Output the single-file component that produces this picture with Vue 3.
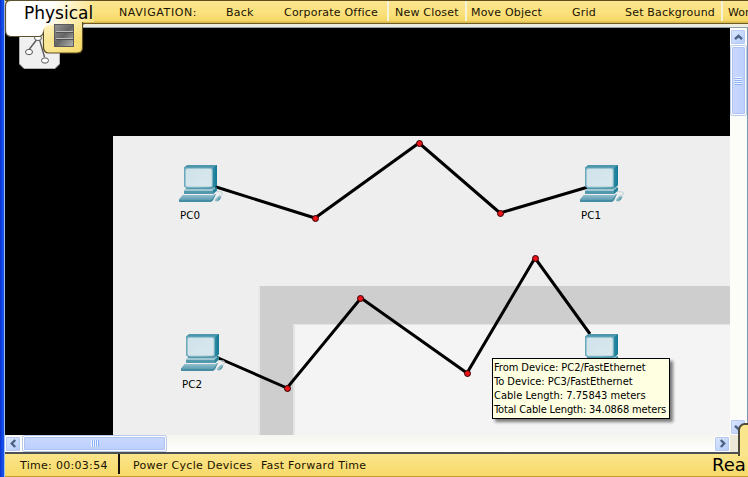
<script setup>
const nav = [
  { text: 'Back', cls: 'back' },
  { text: 'Corporate Office', cls: 'office' },
  { text: 'New Closet', cls: 'closet' },
  { text: 'Move Object', cls: 'move' },
  { text: 'Grid', cls: 'grid' },
  { text: 'Set Background', cls: 'background' },
  { text: 'Wor', cls: 'working' }
]
const cables = [
  '213,186 315,218 419,143 500,213 588,187',
  '216,357 287,388 361,298 467,373 535,258 590,334'
]
const bends = [[315, 218], [419, 143], [500, 213], [287, 388], [360, 298], [467, 373], [535, 258]]
const pcs = [
  { name: 'PC0', x: 179, y: 165, tx: 180, ty: 219 },
  { name: 'PC1', x: 580, y: 165, tx: 581, ty: 219 },
  { name: 'PC2', x: 181, y: 334, tx: 182, ty: 388 },
  { name: '', x: 580, y: 334, tx: 581, ty: 388 }
]
</script>

<template>
  <div class="window">
    <header class="toolbar">
      <span class="nav-title">NAVIGATION:</span>
      <span v-for="n in nav" :key="n.text" class="nav" :class="n.cls">{{ n.text }}</span>
    </header>
    <div class="workspace">
      <svg class="scene" width="725" height="407" viewBox="5 28 725 407">
        <defs>
          <linearGradient id="screen" x1="0" y1="0" x2="1" y2="1">
            <stop offset="0" stop-color="#cfe2ea" /><stop offset="1" stop-color="#dae8ee" />
          </linearGradient>
          <linearGradient id="keys" x1="0" y1="0" x2="0" y2="1">
            <stop offset="0" stop-color="#91c0ce" /><stop offset="1" stop-color="#5e9db1" />
          </linearGradient>
          <linearGradient id="side" x1="0" y1="0" x2="1" y2="0">
            <stop offset="0" stop-color="#2c8aa2" /><stop offset="1" stop-color="#147a96" />
          </linearGradient>
        </defs>
        <rect x="5" y="28" width="725" height="407" fill="#000" />
        <rect x="113" y="136" width="617" height="299" fill="#eee" />
        <path d="M258 435V286H730V435Z" fill="#e8e8e8" />
        <path d="M260 435V286H730V435Z" fill="#cecece" />
        <path d="M293 435V324H730V435Z" fill="#e4e4e4" />
        <path d="M295 435V325H730V435Z" fill="#f4f4f4" />
        <polyline v-for="c in cables" :key="c" :points="c" fill="none" stroke="#000" stroke-width="3" />
        <circle v-for="(b, i) in bends" :key="i" :cx="b[0] + 0.5" :cy="b[1] + 0.5" r="3" fill="#e9151b" stroke="#310000" />
        <g v-for="(p, i) in pcs" :key="i">
          <g :transform="`translate(${p.x} ${p.y})`">
            <path d="M5 2.5L8 0H38V20L34 24H7Z" fill="#4d97ac" />
            <path d="M34 3L38 0V20L34 24Z" fill="url(#side)" />
            <path d="M5 2.5H34V23H7L5 21.5Z" fill="#68a9bb" />
            <rect x="6.500" y="3.500" width="26.500" height="18.500" rx="2" fill="url(#screen)" stroke="#9cc3cf" stroke-width="0.800" />
            <path d="M7 24L35 22L38 23V26L34 29H5V26Z" fill="#5399ad" />
            <path d="M6 24H33L36 22.5V24L33 26H5Z" fill="#a1c8d2" />
            <path d="M34 25L38 22V25L34 29Z" fill="#28829a" />
            <path d="M4 30H34L37 29L34 35.5L32 37H0V34.5Z" fill="#458da3" />
            <path d="M4 30H36L32 35H0Z" fill="url(#keys)" />
            <path d="M37 26.5L43 27L43.500 29.500L40 31" fill="none" stroke="#c2d4da" />
            <path d="M39.5 31L42.5 31.500L41 34L38.500 36.500L36 36V34.500Z" fill="#8ab8c6" />
            <path d="M42.5 31.500L41 34.500L38.500 36.500L39 34Z" fill="#5b9bad" />
          </g>
          <text v-if="p.name" :x="p.tx" :y="p.ty" class="pc-label" textLength="20" lengthAdjust="spacingAndGlyphs">{{ p.name }}</text>
        </g>
      </svg>
      <div class="vscroll">
        <div class="btn"><svg width="9" height="7" viewBox="0 0 9 7"><path d="M1 5.2L4.5 1.8L8 5.2" /></svg></div>
        <div class="vthumb"><i></i></div>
        <div class="btn end"><svg width="9" height="7" viewBox="0 0 9 7"><path d="M1 1.8L4.5 5.2L8 1.8" /></svg></div>
      </div>
      <div class="hscroll">
        <div class="btn"><svg width="7" height="9" viewBox="0 0 7 9"><path d="M5.2 1L1.8 4.5L5.2 8" /></svg></div>
        <div class="hthumb"><i></i></div>
        <div class="btn end"><svg width="7" height="9" viewBox="0 0 7 9"><path d="M1.8 1L5.2 4.5L1.8 8" /></svg></div>
      </div>
      <div class="corner"></div>
    </div>
    <footer class="status">
      <span class="time">Time: 00:03:54</span>
      <b class="divider"></b>
      <span class="power">Power Cycle Devices</span>
      <span class="fast">Fast Forward Time</span>
      <span class="mode">Rea</span>
    </footer>

    <div class="tabs">
      <svg width="96" height="70" viewBox="0 0 96 70">
        <defs>
          <linearGradient id="tab" gradientUnits="userSpaceOnUse" x1="45" y1="20" x2="88" y2="36">
            <stop offset="0" stop-color="#fff" /><stop offset="1" stop-color="#fae17c" />
          </linearGradient>
          <linearGradient id="small" x1="0" y1="0" x2="1" y2="1">
            <stop offset="0" stop-color="#fff3c0" /><stop offset="1" stop-color="#f4d967" />
          </linearGradient>
          <linearGradient id="metal" x1="0" y1="0" x2="1" y2="1">
            <stop offset="0" stop-color="#969696" /><stop offset="0.5" stop-color="#656565" /><stop offset="1" stop-color="#b5b5b5" />
          </linearGradient>
        </defs>
        <path d="M19.500 30H59.500V64L55 68.500H24L19.500 64Z" fill="#f0f0f0" stroke="#b0b0b0" />
        <g stroke="#555" stroke-width="1" fill="#fff">
          <path d="M38 38L29.500 49M39 38L44.500 57" fill="none" stroke-width="1.300" />
          <ellipse cx="38" cy="38" rx="3.500" ry="2.500" />
          <ellipse cx="29" cy="52" rx="3.500" ry="2.700" /><ellipse cx="45" cy="60.500" rx="3.500" ry="2.700" />
        </g>
        <path d="M43.500 22H82.500V48Q82.500 53 77 53H49Q43.500 53 43.500 47Z" fill="url(#small)" stroke="#5d4d21" stroke-width="1.200" />
        <path d="M5.500 30V6Q5.500 .5 11 .5H94V22H82V26H46Q43.500 28 43 33Q42 36.500 38 36.500H11Q5.500 36 5.500 30Z" fill="url(#tab)" />
        <path d="M96 .5H11Q5.500 .5 5.500 6V30Q5.500 36.500 11 36.500H39Q43 36 43.500 32" fill="none" stroke="#5d5130" stroke-width="1.200" />
        <path d="M44 33Q44 27 48 25H82V43H44Z" fill="url(#small)" />
        <path d="M82.500 45V25Q82.500 23.500 85 23.500" fill="none" stroke="#5d4d21" />
        <rect x="54.500" y="24.500" width="19" height="22" fill="url(#metal)" stroke="#5c5c5c" />
        <path d="M56 31.500H73M56 38.500H73" stroke="#bbb" />
        <path d="M56 32.500H73M56 39.500H73" stroke="#505050" />
      </svg>
      <span class="physical">Physical</span>
    </div>

    <div class="mode-tab"></div>

    <div class="tooltip">
      <div class="t1">From Device: PC2/FastEthernet</div>
      <div class="t2">To Device: PC3/FastEthernet</div>
      <div class="t3">Cable Length: 7.75843 meters</div>
      <div class="t4">Total Cable Length: 34.0868 meters</div>
    </div>
  </div>
</template>

<style>
body { overflow: hidden; }
</style>

<style scoped>
.window {
  position: relative;
  box-sizing: border-box;
  width: 748px;
  height: 477px;
  padding-left: 5px;
  overflow: hidden;
  background: linear-gradient(90deg, #0a2fd0 0, #1755f0 3px, #1246d8 4px, #9fc0ea 4px, #9fc0ea 5px, #efede0 5px);
  font-family: Verdana, "DejaVu Sans", sans-serif;
  font-size: 11px;
  color: #1b1300;
}
.toolbar {
  box-sizing: border-box;
  display: flex;
  width: 743px;
  height: 24px;
  padding-left: 114px;
  border-top: 1px solid #5d4d21;
  border-bottom: 1px solid #6d5b23;
  background: linear-gradient(#fbe68f 0, #fae17c 55%, #f5d867 88%, #d4b24b 100%);
  line-height: 23px;
  white-space: nowrap;
}
.toolbar span { flex: none; box-sizing: border-box; height: 20px; letter-spacing: 0.2px; }
.toolbar .nav-title { width: 107px; letter-spacing: 0.6px; }
.back { width: 58px; }
.office { width: 105px; border-right: 2px solid #f6f1d9; }
.closet { width: 78px; padding-left: 6px; border-right: 2px solid #f6f1d9; }
.move { width: 105px; padding-left: 4px; }
.grid { width: 53px; }
.background { width: 98px; border-right: 2px solid #f6f1d9; }
.toolbar .working { padding-left: 5px; letter-spacing: 0; }
.workspace {
  display: grid;
  grid-template-columns: 725px 18px;
  grid-template-rows: 407px 17px;
  margin-top: 3px;
  border-top: 1px solid #8ca0aa;
}
.scene { display: block; }
.pc-label { font: 11px Tahoma, "DejaVu Sans Condensed", sans-serif; fill: #000; }
.vscroll, .hscroll { display: flex; box-sizing: border-box; background: #fcfcf8; }
.vscroll { flex-direction: column; align-items: center; padding: 1px 1px 0 0; border-right: 1px solid #789aba; }
.hscroll { align-items: center; gap: 1px; background: linear-gradient(#f6f5ee, #fff); }
.btn {
  flex: none;
  display: flex;
  align-items: center;
  justify-content: center;
  box-sizing: border-box;
  width: 16px;
  height: 16px;
  border: 1px solid #fff;
  border-radius: 2px;
  background: linear-gradient(135deg, #dce8ff, #b3caf7);
  box-shadow: inset 0 0 0 1px #b6c9f1;
}
.btn svg { display: block; }
.btn path { fill: none; stroke: #4a6285; stroke-width: 2.4; }
.vscroll .end { margin-top: auto; }
.hscroll .end { margin-left: auto; }
.vthumb, .hthumb {
  box-sizing: border-box;
  display: flex;
  align-items: center;
  justify-content: center;
  border: 1px solid #fff;
  border-radius: 2px;
  box-shadow: inset 0 0 0 1px #aec3ef, 0 0 0 1px #b9cae9;
}
.vthumb { width: 15px; height: 69px; margin-top: 1px; background: linear-gradient(90deg, #cad8ff, #bccffc); }
.hthumb { width: 143px; height: 15px; margin-left: 1px; background: linear-gradient(#cad8ff, #bccffc); }
.vthumb i { width: 7px; height: 8px; background: repeating-linear-gradient(#eef4ff 0 1px, #8cb0f8 1px 2px); }
.hthumb i { width: 8px; height: 7px; background: repeating-linear-gradient(90deg, #eef4ff 0 1px, #8cb0f8 1px 2px); }
.corner { background: #ece9d8; }
.status {
  box-sizing: border-box;
  display: flex;
  width: 743px;
  height: 25px;
  padding-left: 15px;
  border-top: 2px solid #4d5052;
  border-bottom: 1px solid #c29d29;
  box-shadow: 0 -1px #9db3bf;
  background: linear-gradient(#fbe58b, #f7da69);
  line-height: 24px;
  white-space: nowrap;
  letter-spacing: 0.3px;
}
.status > * { flex: none; box-sizing: border-box; }
.time { width: 98px; }
.divider { width: 2px; height: 20px; background: #17120a; }
.power { width: 141px; padding-left: 13px; }
.mode { margin-left: auto; width: 36px; font-size: 18px; line-height: 22px; letter-spacing: 0; color: #000; }
.tabs { position: absolute; left: 0; top: 0; width: 96px; height: 70px; }
.tabs svg { display: block; }
.physical { position: absolute; left: 24px; top: 3px; font-size: 17px; line-height: 20px; color: #000; }
.mode-tab {
  position: absolute;
  left: 738px;
  top: 423px;
  width: 20px;
  height: 31px;
  border: 2px solid #4d4a39;
  border-bottom: 0;
  border-radius: 7px 0 0 0;
  background: #fae58c;
}
.tooltip {
  position: absolute;
  left: 492px;
  top: 358px;
  box-sizing: border-box;
  width: 178px;
  height: 61px;
  padding: 2px 0 0 1px;
  border: 1px solid #000;
  background: #ffffe1;
  box-shadow: 3px 3px 3px rgba(0, 0, 0, 0.5);
  font: 11px/14px Tahoma, "DejaVu Sans Condensed", sans-serif;
  color: #000;
  white-space: nowrap;
}
.t1 { letter-spacing: -0.04px; }
.t3 { letter-spacing: 0.03px; }
.t4 { letter-spacing: -0.14px; }
</style>
